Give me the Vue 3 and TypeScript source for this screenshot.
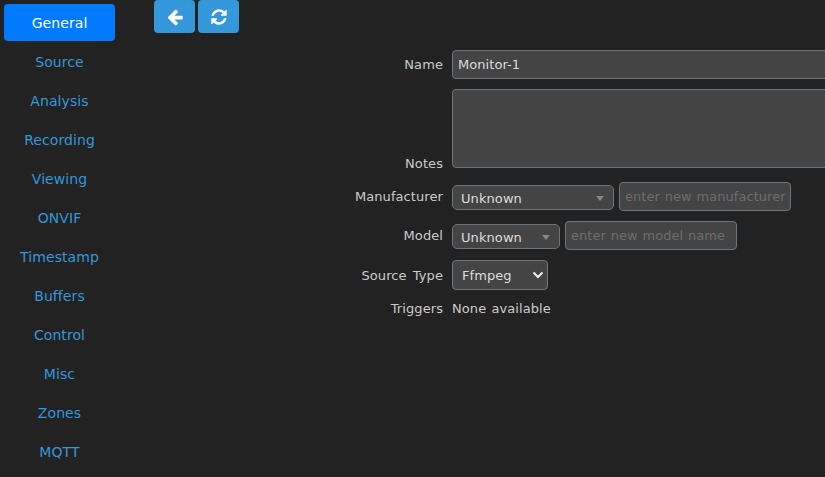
<script setup lang="ts">
const tabs: string[] = ['General','Source','Analysis','Recording','Viewing','ONVIF','Timestamp','Buffers','Control','Misc','Zones','MQTT']
</script>

<template>
  <div class="page">
    <nav class="side">
      <a v-for="(t, i) in tabs" :key="t" class="tab" :class="{ active: i === 0 }">{{ t }}</a>
    </nav>
    <main class="main">
      <div class="bar">
        <button class="btn" type="button" aria-label="Back">
          <svg viewBox="0 0 1792 1792" width="18" height="18"><path fill="#fff" d="M1664 896v128q0 53-32.5 90.5t-84.5 37.5h-704l293 294q38 36 38 90t-38 90l-75 76q-37 37-90 37-52 0-91-37l-651-652q-37-37-37-90 0-52 37-91l651-650q38-38 91-38 52 0 90 38l75 74q38 38 38 91t-38 91l-293 293h704q52 0 84.5 37.5t32.5 90.5z"/></svg>
        </button>
        <button class="btn" type="button" aria-label="Refresh">
          <svg viewBox="0 0 1792 1792" width="18" height="18"><path fill="#fff" d="M1639 1056q0 5-1 7-64 268-268 434.5t-478 166.5q-146 0-282.5-55t-243.5-157l-129 129q-19 19-45 19t-45-19-19-45v-448q0-26 19-45t45-19h448q26 0 45 19t19 45-19 45l-137 137q71 66 161 102t187 36q134 0 250-65t186-179q11-17 53-117 8-23 30-23h192q13 0 22.5 9.5t9.5 22.5zm25-800v448q0 26-19 45t-45 19h-448q-26 0-45-19t-19-45 19-45l138-138q-148-137-349-137-134 0-250 65t-186 179q-11 17-53 117-8 23-30 23h-199q-13 0-22.5-9.5t-9.5-22.5v-7q65-268 270-434.5t480-166.5q146 0 284 55.5t245 156.5l130-129q19-19 45-19t45 19 19 45z"/></svg>
        </button>
      </div>
      <div class="form">
        <div class="row">
          <label class="lbl">Name</label>
          <input class="field wide h29" value="Monitor-1" />
        </div>
        <div class="row r-notes">
          <label class="lbl lbl-end">Notes</label>
          <textarea class="field wide notes"></textarea>
        </div>
        <div class="row r-man">
          <label class="lbl">Manufacturer</label>
          <div class="ctl">
            <div class="chosen w162"><span>Unknown</span><i class="tri"></i></div>
            <input class="field ph w172" placeholder="enter new manufacturer" />
          </div>
        </div>
        <div class="row r-model">
          <label class="lbl">Model</label>
          <div class="ctl">
            <div class="chosen w108"><span>Unknown</span><i class="tri"></i></div>
            <input class="field ph w172" placeholder="enter new model name" />
          </div>
        </div>
        <div class="row r-src">
          <label class="lbl">Source Type</label>
          <div class="native">
            <span>Ffmpeg</span>
            <svg viewBox="0 0 12 8" width="12" height="8"><path d="M1.5 1.5 6 6l4.5-4.5" fill="none" stroke="#eee" stroke-width="2"/></svg>
          </div>
        </div>
        <div class="row r-trig">
          <label class="lbl">Triggers</label>
          <span class="val">None available</span>
        </div>
      </div>
    </main>
  </div>
</template>

<style>
html, body { margin: 0; background: #222; overflow: hidden; }
</style>

<style scoped>
.page {
  display: flex;
  width: 825px;
  height: 477px;
  overflow: hidden;
  background: #222;
  font-family: "DejaVu Sans", sans-serif;
  font-size: 13px;
  letter-spacing: 0.08px;
  word-spacing: 2px;
}
.side {
  display: flex;
  flex-direction: column;
  gap: 2px;
  flex: none;
  width: 111px;
  padding: 4px 0 0 4px;
}
.tab {
  height: 37px;
  line-height: 39px;
  border-radius: 4px;
  text-align: center;
  font-size: 14px;
  color: #3498db;
}
.tab.active { background: #007bff; color: #fff; }
.main { flex: 1; min-width: 0; }
.bar { display: flex; gap: 3px; height: 33px; padding-left: 39px; }
.btn {
  display: flex;
  align-items: center;
  justify-content: center;
  width: 41px;
  height: 33px;
  padding: 0;
  border: 0;
  border-radius: 4px;
  background: #3498db;
}
.form { padding-top: 17px; }
.row {
  display: grid;
  grid-template-columns: 328px 1fr;
  column-gap: 9px;
  align-items: center;
}
.lbl { text-align: right; color: #ccc; }
.lbl-end { align-self: end; line-height: 16px; margin-bottom: -4px; }
.r-notes { margin-top: 10px; }
.r-man { margin-top: 14px; }
.r-model { margin-top: 10px; }
.r-src { margin-top: 10px; }
.r-trig { margin-top: 11px; }
.field {
  box-sizing: border-box;
  display: block;
  margin: 0;
  border: 1px solid #6c757d;
  border-radius: 4px;
  background: #444;
  color: #ddd;
  font: 13px "DejaVu Sans", sans-serif;
  letter-spacing: 0.06px;
  padding: 0 5px;
  outline: none;
  resize: none;
}
.wide { width: 500px; }
.h29 { height: 29px; }
.notes { height: 79px; }
.ph { height: 29px; word-spacing: 0.5px; }
.ph::placeholder { color: #6e6e6e; opacity: 1; }
.w172 { width: 172px; }
.ctl { display: flex; align-items: center; gap: 5px; }
.chosen {
  box-sizing: border-box;
  display: flex;
  align-items: center;
  justify-content: space-between;
  height: 25px;
  margin-top: 2px;
  padding: 2px 9px 0 8px;
  border: 1px solid #6c757d;
  border-radius: 5px;
  background: #444;
  color: #ddd;
}
.w162 { width: 162px; }
.w108 { width: 108px; }
.tri {
  width: 0;
  height: 0;
  border-left: 4px solid transparent;
  border-right: 4px solid transparent;
  border-top: 5px solid #888;
}
.native {
  box-sizing: border-box;
  display: flex;
  align-items: center;
  justify-content: space-between;
  width: 96px;
  height: 30px;
  padding: 0 3px 0 9px;
  border: 1px solid #6c757d;
  border-radius: 4px;
  background: #444;
  color: #ddd;
}
.val { color: #ccc; word-spacing: 1px; }
</style>
